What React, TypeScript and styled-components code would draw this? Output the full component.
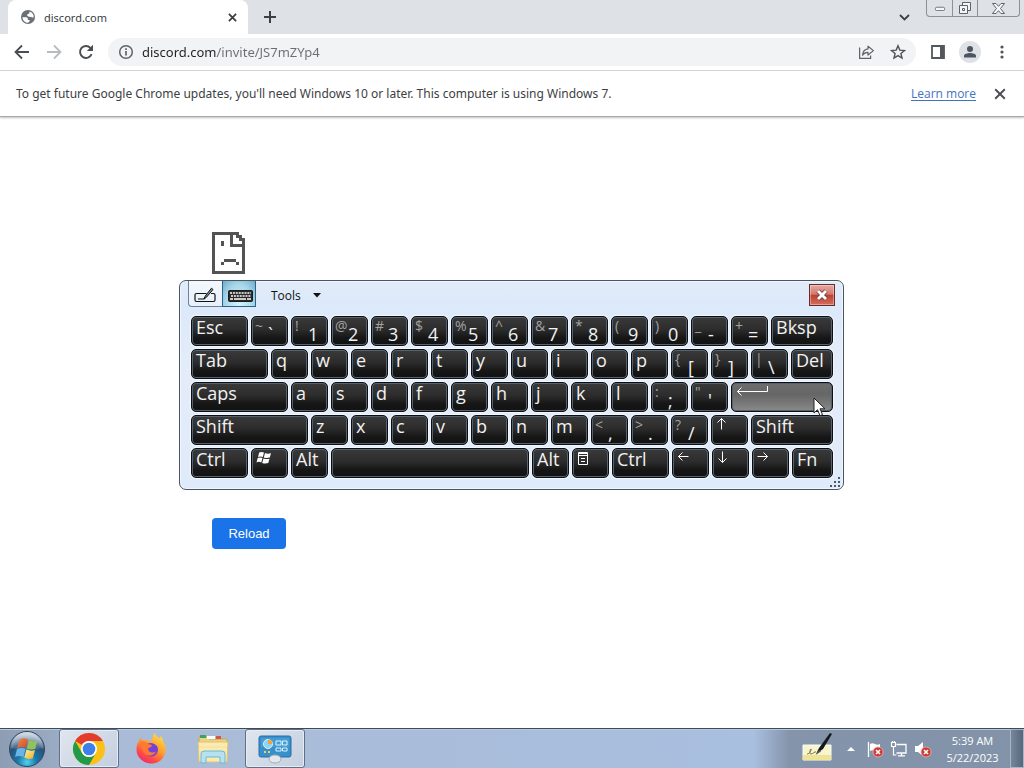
import React from "react";
import styled, { createGlobalStyle, css } from "styled-components";

const GlobalStyle = createGlobalStyle`
  *, *::before, *::after { box-sizing: border-box; }
  body {
    margin: 0;
    background: #fff;
    font-family: "Open Sans", "Noto Sans", sans-serif;
    font-size: 12px;
    color: #3c4043;
  }
  button, input { font-family: inherit; }
`;

const Desktop = styled.div`
  position: relative;
  display: flex;
  flex-direction: column;
  min-height: 100vh;
`;

const IconButton = styled.button<{ $width?: number }>`
  display: flex;
  align-items: center;
  justify-content: center;
  flex: none;
  width: ${(p) => p.$width ?? 32}px;
  height: 28px;
  padding: 0;
  border: 0;
  background: none;
  color: #5f6368;
`;

/* ---------- browser ---------- */

const TabStrip = styled.header`
  display: flex;
  align-items: stretch;
  height: 34px;
  padding-left: 8px;
  background: #dee1e6;
`;

const Tab = styled.div`
  display: flex;
  align-items: center;
  width: 240px;
  padding: 0 0 0 12px;
  gap: 8px;
  border-radius: 8px 8px 0 0;
  background: #fff;
`;

const TabTitle = styled.span`
  flex: 1;
  font-family: "Noto Sans", "Open Sans", sans-serif;
  font-size: 11px;
`;

const TabActions = styled.div`
  display: flex;
  align-items: center;
  flex: 1;
  justify-content: space-between;
  padding: 0 6px;
`;

const CaptionButtons = styled.div`
  display: flex;
  align-self: flex-start;
  height: 17px;
  margin-right: 4px;
  border: 1px solid #8b9199;
  border-top: 0;
  border-radius: 0 0 4px 4px;
`;

const CaptionButton = styled.button<{ $wide?: boolean }>`
  display: flex;
  align-items: center;
  justify-content: center;
  width: ${(p) => (p.$wide ? 42 : 25)}px;
  padding: 0;
  border: 0;
  background: none;
  & + & { border-left: 1px solid #8b9199; }
`;

const Toolbar = styled.nav`
  display: flex;
  align-items: center;
  height: 37px;
  padding: 0 6px;
  border-bottom: 1px solid #d5d7da;
  background: #fff;
`;

const AddressBar = styled.label`
  display: flex;
  align-items: center;
  flex: 1;
  height: 28px;
  margin: 0 6px;
  padding: 0 2px 0 10px;
  border-radius: 14px;
  background: #f1f3f4;
`;

const AddressInput = styled.input`
  flex: 1;
  min-width: 0;
  height: 24px;
  margin-left: 8px;
  padding: 0;
  border: 0;
  outline: 0;
  font-family: "Noto Sans", "Open Sans", sans-serif;
  font-size: 13px;
  color: #6a6e73;
  background: linear-gradient(90deg, #202124 75px, #6a6e73 75px);
  background-clip: text;
  -webkit-text-fill-color: transparent;
`;

const Avatar = styled.span`
  display: flex;
  align-items: center;
  justify-content: center;
  width: 22px;
  height: 22px;
  border-radius: 50%;
  background: #dee1e6;
`;

const InfoBar = styled.section`
  display: flex;
  align-items: center;
  min-height: 46px;
  padding: 0 8px 0 16px;
  border-bottom: 1px solid #a8a8a8;
  box-shadow: 0 1px 2px rgba(0, 0, 0, 0.25);
`;

const InfoText = styled.p`
  flex: 1;
  margin: 0;
  font-family: "Noto Sans", "Open Sans", sans-serif;
`;

const InfoLink = styled.a`
  margin-right: 8px;
  color: #3f74bd;
  text-decoration: underline;
  text-underline-offset: 2px;
`;

const Page = styled.main`
  flex: 1;
  display: flex;
  flex-direction: column;
  align-items: flex-start;
  justify-content: space-between;
  width: 100%;
  max-width: 600px;
  min-height: 611px;
  margin: 0 auto;
  padding: 115px 0 179px;
`;

const ReloadButton = styled.button`
  height: 31px;
  min-width: 74px;
  padding: 0 16px;
  border: 0;
  border-radius: 4px;
  background: #1a73e8;
  color: #fff;
  font-family: "Liberation Sans", sans-serif;
  font-size: 13px;
`;

/* ---------- on-screen keyboard ---------- */

const KeyboardWindow = styled.section`
  position: absolute;
  top: 280px;
  left: calc(50% - 333px);
  width: 665px;
  padding: 0 10px 11px 11px;
  border: 1px solid #4a5563;
  border-radius: 7px;
  background: linear-gradient(180deg, #e2ebf9 0%, #dce9fa 12%, #e4ecf9 45%, #dfeafa 100%);
  box-shadow: inset 0 0 0 1px #f0f6fd;
`;

const KeyboardHeader = styled.div`
  display: flex;
  align-items: flex-start;
  height: 35px;
  margin-left: -3px;
`;

const ModeButton = styled.button<{ $active?: boolean }>`
  display: flex;
  align-items: center;
  justify-content: center;
  width: 35px;
  height: 26px;
  padding: 3px 2px 0 0;
  border: 1px solid #6d8299;
  border-top: 0;
  border-radius: 0 0 0 4px;
  background: linear-gradient(180deg, #f4f8fd, #e6effa);
  ${(p) =>
    p.$active &&
    css`
      width: 34px;
      margin-left: -1px;
      padding: 4px 0 0 2px;
      border-color: #2c628b;
      border-radius: 0;
      background: radial-gradient(ellipse at 50% 100%, #d5f5fc 0%, #a9d8ea 60%, #6fabcc 100%);
    `}
`;

const ToolsButton = styled.button`
  display: flex;
  align-items: center;
  gap: 12px;
  height: 29px;
  margin-left: 9px;
  border: 0;
  background: none;
  font-size: 12px;
  color: #111;
`;

const CloseButton = styled.button`
  display: flex;
  align-items: center;
  justify-content: center;
  width: 26px;
  height: 22px;
  margin: 3px -2px 0 auto;
  padding: 0;
  border: 1px solid #6b2a2a;
  background: linear-gradient(180deg, #e6aaa3 0%, #d6776c 46%, #bd4031 52%, #d2705e 100%);
  box-shadow: inset 0 0 0 1px rgba(255, 255, 255, 0.35);
`;

const KeyRows = styled.div`
  display: flex;
  flex-direction: column;
  gap: 3px;
`;

const KeyRow = styled.div`
  display: flex;
  gap: 3px;
`;

const KeyCap = styled.button<{ $width: number; $lit?: boolean; $fill?: boolean }>`
  display: flex;
  align-items: flex-start;
  flex: ${(p) => (p.$fill ? "1 1 0" : "none")};
  width: ${(p) => p.$width}px;
  height: 30px;
  padding: 0 0 0 4px;
  border: 1px solid #0b0f14;
  border-radius: 5px;
  background: ${(p) =>
    p.$lit
      ? "linear-gradient(180deg, #6e6e6e, #666 40%, #777 70%, #8a8a8a)"
      : "linear-gradient(180deg, #3a3a3a, #2c2c2c 45%, #161616 75%, #121212)"};
  box-shadow: inset 0 0 0 1px #56626d, 0 0 1px 1px #f3f7fc;
  color: #f2f2f2;
  font-size: 18px;
  line-height: 20px;
  text-align: left;
`;

const Shifted = styled.span`
  flex: none;
  width: 12px;
  margin-left: -1px;
  font-size: 14px;
  line-height: 17px;
  color: #a2a2a2;
`;

const Base = styled.span`
  padding-top: 7px;
  margin-left: 1px;
`;

const Glyph = styled.svg`
  display: block;
  flex: none;
  margin-top: 2px;
`;

const Grip = styled.svg`
  position: absolute;
  right: 3px;
  bottom: 2px;
`;

const Pointer = styled.svg`
  position: absolute;
  top: 116px;
  left: 633px;
`;

/* ---------- taskbar ---------- */

const Taskbar = styled.footer`
  display: flex;
  align-items: stretch;
  height: 40px;
  border-top: 1px solid #3d4a5a;
  background: linear-gradient(90deg, #8d9db4 0, #9aabc4 58px, #a9bbd6 120px, #a9bfdf calc(100% - 270px), #8494ab calc(100% - 235px), #8292a8 100%);
  box-shadow: inset 0 1px 0 #bccadd;
`;

const StartButton = styled.button`
  display: flex;
  align-items: center;
  justify-content: center;
  width: 53px;
  margin-right: 6px;
  padding: 0;
  border: 0;
  background: none;
`;

const TaskButton = styled.button<{ $open?: boolean }>`
  display: flex;
  align-items: center;
  justify-content: center;
  width: 60px;
  margin-right: 2px;
  padding: 0;
  border: 1px solid transparent;
  border-radius: 3px;
  background: none;
  ${(p) =>
    p.$open &&
    css`
      border-color: #5f7086;
      background: linear-gradient(135deg, #e0e6ee, #c3cedf);
      box-shadow: inset 0 0 0 1px #e6ecf4;
    `}
`;

const Tray = styled.div`
  display: flex;
  align-items: center;
  margin-left: auto;
`;

const TrayButton = styled.button<{ $width?: number }>`
  display: flex;
  align-items: center;
  justify-content: center;
  width: ${(p) => p.$width ?? 24}px;
  height: 38px;
  padding: 0;
  border: 0;
  background: none;
`;

const Clock = styled.time`
  width: 75px;
  text-align: center;
  font-size: 11px;
  line-height: 17px;
  color: #fff;
`;

const ShowDesktop = styled.button`
  align-self: stretch;
  width: 14px;
  padding: 0;
  border: 1px solid #a9b5c4;
  background: linear-gradient(90deg, #76869b, #56667b);
`;

/* ---------- icons ---------- */

const GlobeIcon = () => (
  <svg width="16" height="16" viewBox="0 0 16 16" aria-hidden="true">
    <circle cx="8" cy="8" r="7" fill="#6b7074" />
    <path d="M2.500 8.200H6.500q1.300.2 1.300 1.500v1.200h1.800v1.300L8 13.800C4.800 13.600 2.500 11 2.500 8.200z" fill="#fff" />
    <path d="M9.800 2.600c2.600 1 4 3.200 3.900 5.600q-1.700 1-2.700-.4-1.200.4-2.600-.3Q6.500 7 7.400 5.300 9.700 5 9.800 2.600z" fill="#fff" />
  </svg>
);

const Cross = ({ size = 10, color = "#3c4043", stroke = 2 }) => (
  <svg width={size} height={size} viewBox="0 0 10 10" aria-hidden="true">
    <path d="M1 1l8 8M9 1l-8 8" stroke={color} strokeWidth={stroke} fill="none" />
  </svg>
);

const ArrowIcon = ({ color, forward = false }: { color: string; forward?: boolean }) => (
  <svg width="16" height="16" viewBox="0 0 16 16" aria-hidden="true">
    <path
      d={forward ? "M1 8h13M8 1.500 14.500 8 8 14.500" : "M15 8H2M8 1.500 1.500 8 8 14.500"}
      stroke={color}
      strokeWidth="1.800"
      fill="none"
    />
  </svg>
);

const ReloadIcon = () => (
  <svg width="16" height="16" viewBox="0 0 16 16" aria-hidden="true">
    <path d="M13.600 10.200A6 6 0 1 1 12.400 3.800L14 5.500" stroke="#4a4e52" strokeWidth="1.900" fill="none" />
    <path d="M15 .8v6.200H8.800z" fill="#4a4e52" />
  </svg>
);

const InfoIcon = () => (
  <svg width="16" height="16" viewBox="0 0 16 16" aria-hidden="true">
    <circle cx="8" cy="8" r="6.300" stroke="#5f6368" strokeWidth="1.500" fill="none" />
    <path d="M8 7v4.500M8 4.200v1.700" stroke="#5f6368" strokeWidth="1.700" />
  </svg>
);

const ShareIcon = () => (
  <svg width="17" height="16" viewBox="0 0 17 16" fill="none" stroke="#5f6368" strokeWidth="1.200" aria-hidden="true">
    <path d="M1.600 3.500v10.900h11V11.500" />
    <path d="M10 2.200 15.400 6.600 10 11V8.300C7.600 8.300 5.800 9.100 4.500 11.200 4.800 7.600 6.800 5.300 10 4.900z" strokeLinejoin="round" />
  </svg>
);

const StarIcon = () => (
  <svg width="16" height="16" viewBox="0 0 16 16" aria-hidden="true">
    <path d="M8 1.800l1.800 4.300 4.700.4-3.600 3 1.100 4.600L8 11.600l-4 2.500 1.100-4.600-3.600-3 4.700-.4z" fill="none" stroke="#4f5357" strokeWidth="1.400" />
  </svg>
);

const SidePanelIcon = () => (
  <svg width="14" height="14" viewBox="0 0 14 14" aria-hidden="true">
    <path d="M1 1h12v12H1z" fill="none" stroke="#54585d" strokeWidth="1.800" />
    <path d="M9 1h4v12H9z" fill="#54585d" />
  </svg>
);

const PersonIcon = () => (
  <svg width="14" height="14" viewBox="0 0 14 14" fill="#4d5560" aria-hidden="true">
    <circle cx="7" cy="4" r="3" />
    <path d="M1 12.500v-1.600C1 8.900 4.500 8 7 8s6 .9 6 2.900v1.600z" />
  </svg>
);

const DotsIcon = () => (
  <svg width="4" height="14" viewBox="0 0 4 14" fill="#4f5357" aria-hidden="true">
    <circle cx="2" cy="2" r="1.600" />
    <circle cx="2" cy="7" r="1.600" />
    <circle cx="2" cy="12" r="1.600" />
  </svg>
);

const SadPageIcon = () => (
  <svg width="33" height="42" viewBox="0 0 33 42" fill="#535353" role="img" aria-label="Page error">
    <path d="M0 0h27v3h3v3h3v36H0zM3 3v36h27V15H18V3zM21 3v9h9V9h-3V6h-3V3z" fillRule="evenodd" />
    <path d="M9 9h3v5H9zM12 27h12v3H12zM9 30h3v3H9zM24 30h3v3h-3z" />
  </svg>
);

const PenInputIcon = () => (
  <svg width="22" height="17" viewBox="0 0 22 17" aria-hidden="true">
    <path d="M12.500 6.500H2.500q-1.500 0-1.500 1.500v5q0 1.500 1.500 1.500h17q1.500 0 1.500-1.500V8q0-1.500-1.500-1.500h-2.500" fill="none" stroke="#111" strokeWidth="1.200" />
    <path d="M4 12h5.500l1.200-.6" stroke="#111" strokeWidth="1.200" fill="none" />
    <path d="M10 12l1.300-3 6.200-7.800 1.500 1.300L12.500 10.200z" fill="#8a8f95" stroke="#111" />
  </svg>
);

const KeyboardIcon = () => (
  <svg width="25" height="12" viewBox="0 0 25 12" aria-hidden="true">
    <rect x=".5" y=".5" width="24" height="11" rx="1" fill="#2a2a2a" stroke="#1b1b1b" />
    <path d="M2 3h21" stroke="#fff" strokeWidth="1.600" strokeDasharray="2 .9" />
    <path d="M3 6h20" stroke="#fff" strokeWidth="1.600" strokeDasharray="2 .9" />
    <path d="M2 9h3M6 9h12M19 9h4" stroke="#fff" strokeWidth="1.600" />
  </svg>
);

const WindowsFlag = () => (
  <Glyph width="16" height="14" viewBox="0 0 16 14" fill="#fff" aria-hidden="true">
    <path d="M3.200 1.500Q5.500.3 8 1.600L6.800 6Q4.500 4.900 2 6zM9 2q2.500 1.200 6 .2L13.800 6.500Q10.500 7.500 7.800 6.400zM1.700 7Q4 5.900 6.500 7L5.300 11.500Q3 10.300.5 11.400zM7.500 7.500q3 1.100 6 .2L12.300 12Q9 13 6.200 11.900z" />
  </Glyph>
);

const MenuGlyph = () => (
  <Glyph width="13" height="15" viewBox="0 0 13 15" fill="none" stroke="#fff" aria-hidden="true">
    <path d="M1.500 1.500h9v12h-9zM1.500 4.500h9M4 7.500h4M4 10.500h4" />
    <path d="M1 2.500h10" />
  </Glyph>
);

const arrowPaths = {
  left: "M1.500 5.500h10M5.500 1.500l-4 4 4 4",
  right: "M.5 5.500h10M6.500 1.500l4 4-4 4",
  up: "M5.500.5v11M1.500 4.500l4-4 4 4",
  down: "M5.500.5v11M1.500 7.500l4 4 4-4",
};

const ArrowGlyph = ({ dir }: { dir: keyof typeof arrowPaths }) => (
  <Glyph width="12" height="13" viewBox="0 0 12 13" fill="none" stroke="#fff" aria-hidden="true">
    <path d={arrowPaths[dir]} />
  </Glyph>
);

const EnterGlyph = () => (
  <Glyph width="33" height="12" viewBox="0 0 33 12" fill="none" stroke="#fff" aria-hidden="true">
    <path d="M31.500 1v5.500H1.500M5.500 2.500l-4 4 4 4" />
  </Glyph>
);

const StartOrb = () => (
  <svg width="38" height="38" viewBox="0 0 38 38" aria-hidden="true">
    <defs>
      <radialGradient id="orb" cx="50%" cy="88%" r="80%">
        <stop offset="0" stopColor="#4fd2ee" />
        <stop offset=".35" stopColor="#1877a8" />
        <stop offset=".7" stopColor="#2b5277" />
        <stop offset="1" stopColor="#8fa9c0" />
      </radialGradient>
      <linearGradient id="shine" x1="0" y1="0" x2="0" y2="1">
        <stop offset="0" stopColor="#fff" stopOpacity=".6" />
        <stop offset="1" stopColor="#fff" stopOpacity=".08" />
      </linearGradient>
      <linearGradient id="paneRed" x1="0" y1="0" x2="1" y2="1">
        <stop offset="0" stopColor="#f08a4c" />
        <stop offset="1" stopColor="#d2452a" />
      </linearGradient>
      <linearGradient id="paneYellow" x1="0" y1="0" x2="1" y2="1">
        <stop offset="0" stopColor="#fff0a0" />
        <stop offset="1" stopColor="#f2a922" />
      </linearGradient>
    </defs>
    <circle cx="19" cy="19" r="17.500" fill="url(#orb)" stroke="#30465d" />
    <path d="M3 18a16 16 0 0 1 32 0q-16 4-32 0z" fill="url(#shine)" />
    <path d="M11.500 9.500q4-2.500 8.500 0l-2.200 8.500q-4-2-8.500 0z" fill="url(#paneRed)" />
    <path d="M21 10q4 2.500 8.500.5l-2.200 8.300q-4.500 1.700-8.600-.3z" fill="#94c25a" />
    <path d="M9 19q4.200-2 8.500 0l-2.200 8.300q-4-2.500-8.300-.3z" fill="#6cb4e6" />
    <path d="M18.400 19.600q4.300 2 8.600.5l-2.200 8.100q-4.500 1.700-8.500-.7z" fill="url(#paneYellow)" />
  </svg>
);

const ChromeIcon = () => (
  <svg width="34" height="34" viewBox="-17 -17 34 34" aria-hidden="true">
    <circle r="16" fill="#fbc116" />
    <path d="M-13.860-8A16 16 0 0 1 13.860-8H0a8 8 0 0 0-6.930 4z" fill="#e33b2e" />
    <path d="M-13.860-8A16 16 0 0 0 0 16L6.930 4A8 8 0 0 1-6.930 4z" fill="#229a4a" />
    <circle r="8" fill="#fff" />
    <circle r="6.300" fill="#3f7fe8" />
  </svg>
);

const FirefoxIcon = () => (
  <svg width="32" height="32" viewBox="0 0 32 32" aria-hidden="true">
    <defs>
      <linearGradient id="fox" x1=".8" y1="0" x2=".2" y2="1">
        <stop offset="0" stopColor="#ffe14a" />
        <stop offset=".45" stopColor="#ff9a2a" />
        <stop offset=".75" stopColor="#ff4a45" />
        <stop offset="1" stopColor="#e62a78" />
      </linearGradient>
    </defs>
    <path d="M19.500 0c1.500 2.500 3 4 5 5.500q1-1 1-2.500c2 2 3 4.500 3 6.500 2 3 2.500 5.500 2 8.500C29.500 26 23.500 30.500 16.500 30.500 8.500 30.500 1.500 24.500 1.500 17c0-4 1-7 2.500-9L5 5l3 2.500c1.500-.5 3-.5 4.500 0q3 .5 4.500 1C17 5.500 18 2.500 19.500 0z" fill="url(#fox)" />
    <path d="M10 13c2-3.500 8-4.500 12 0 3 5-1 11-6 10.500-5 0-8-4.500-6-10.500z" fill="#7542d8" />
    <path d="M5 9c3-1.500 6-.5 8 2l4 1c0 2-2.500 2.500-4 3.500 0 4 4.500 5 8 3-2 4.500-8 5.500-11.500 2C6.500 17.500 8 13 5 9z" fill="#ff7a30" />
  </svg>
);

const ExplorerIcon = () => (
  <svg width="34" height="32" viewBox="0 0 34 32" aria-hidden="true">
    <path d="M3 4h8l2 2h18v22H3z" fill="#ecd283" stroke="#c7a95c" />
    <path d="M4 2h6v3H4z" fill="#3fa15b" />
    <path d="M11 3h8v3h-8z" fill="#fff" />
    <path d="M20 3h5v3h-5z" fill="#d9573e" />
    <path d="M2 9h30l-1 20H3z" fill="#fbebb0" stroke="#dec27a" />
    <path d="M3 14h28M3 19h28" stroke="#f6e096" />
    <path d="M5 30V21q0-3 3-3h18q3 0 3 3v9h-5v-6H10v6z" fill="#b5e1f0" stroke="#6db8d4" />
  </svg>
);

const ControlPanelIcon = () => (
  <svg width="34" height="30" viewBox="0 0 34 30" aria-hidden="true">
    <rect x="1" y="2" width="32" height="21" rx="2" fill="#3590cc" stroke="#2a6da3" />
    <path d="M3 4h28v9H3z" fill="#56aadd" opacity=".5" />
    <circle cx="10" cy="10" r="4.500" fill="#8fd3f2" stroke="#dff2fc" />
    <path d="M10 10V5.500A4.500 4.500 0 0 1 14.500 10z" fill="#f3a03a" />
    <path d="M18 7h5v4h-5zM24.500 7h4.500v4h-4.500zM18 14h5v3h-5zM24.500 14h4.500v3h-4.500z" fill="none" stroke="#dff2fc" />
    <path d="M6 18h2M10 18h2" stroke="#f6cf58" strokeWidth="2" />
    <ellipse cx="17" cy="25" rx="6" ry="4" fill="#e4e7ea" stroke="#a4acb2" />
  </svg>
);

const TabletPenIcon = () => (
  <svg width="34" height="32" viewBox="0 0 34 32" aria-hidden="true">
    <path d="M2 12h28v15H2z" fill="#f7f5cf" stroke="#fbfbf4" />
    <path d="M2 22h28v5H2z" fill="#efe394" />
    <path d="M6 21c3 0 5-5 4-5s-2 5 0 5 4-3 5-2" fill="none" stroke="#7a6d46" />
    <path d="M15 21l3-6L29 0l2 1-9 15z" fill="#16181b" />
    <path d="M14.500 22l3.500-5 2 1.500z" fill="#555" />
  </svg>
);

const ErrorBadge = ({ x, y }: { x: number; y: number }) => (
  <g transform={`translate(${x} ${y})`}>
    <circle r="5" fill="#cf3a36" stroke="#e9b4b0" strokeWidth=".8" />
    <path d="M-2-2l4 4M2-2l-4 4" stroke="#fff" strokeWidth="1.600" />
  </g>
);

const FlagIcon = () => (
  <svg width="18" height="18" viewBox="0 0 18 18" aria-hidden="true">
    <path d="M2.500 2v15" stroke="#fff" strokeWidth="1.300" />
    <path d="M4 4q2.500-1.500 5 0t5 0v7q-2 1.500-5 0t-5 0z" fill="#fff" />
    <ErrorBadge x={12} y={12} />
  </svg>
);

const NetworkIcon = () => (
  <svg width="18" height="18" viewBox="0 0 18 18" fill="none" stroke="#fff" aria-hidden="true">
    <path d="M6.500 4.500h9.500v8.500h-9.500M8 15.800h7M11.500 13v3" strokeWidth="1.300" />
    <path d="M1.500 2.500h4v4h-4zM3.500 6.500v8.500h3M2.500 1v1.500M4.500 1v1.500" strokeWidth="1.200" />
  </svg>
);

const SpeakerIcon = () => (
  <svg width="18" height="18" viewBox="0 0 18 18" aria-hidden="true">
    <path d="M1 6h3l5-4v14l-5-4H1z" fill="#fff" />
    <ErrorBadge x={12} y={12} />
  </svg>
);

/* ---------- key data ---------- */

type KeyDef = {
  label?: string;
  shifted?: string;
  width?: number;
  name?: string;
  glyph?: React.ReactNode;
  lit?: boolean;
};

const letters = (s: string): KeyDef[] => s.split("").map((label) => ({ label }));
const pair = (shifted: string, label: string): KeyDef => ({ shifted, label });

const rows: KeyDef[][] = [
  [
    { label: "Esc", width: 57 },
    pair("~", "`"), pair("!", "1"), pair("@", "2"), pair("#", "3"), pair("$", "4"), pair("%", "5"),
    pair("^", "6"), pair("&", "7"), pair("*", "8"), pair("(", "9"), pair(")", "0"), pair("_", "-"), pair("+", "="),
    { label: "Bksp" },
  ],
  [{ label: "Tab", width: 77 }, ...letters("qwertyuiop"), pair("{", "["), pair("}", "]"), pair("|", "\\"), { label: "Del" }],
  [
    { label: "Caps", width: 97 }, ...letters("asdfghjkl"), pair(":", ";"), pair("\"", "'"),
    { name: "Enter", glyph: <EnterGlyph />, lit: true },
  ],
  [
    { label: "Shift", width: 117 }, ...letters("zxcvbnm"), pair("<", ","), pair(">", "."), pair("?", "/"),
    { name: "Up", glyph: <ArrowGlyph dir="up" /> },
    { label: "Shift" },
  ],
  [
    { label: "Ctrl", width: 57 },
    { name: "Windows", glyph: <WindowsFlag /> },
    { label: "Alt" },
    { name: "Space", width: 198 },
    { label: "Alt" },
    { name: "Menu", glyph: <MenuGlyph /> },
    { label: "Ctrl", width: 57 },
    { name: "Left", glyph: <ArrowGlyph dir="left" /> },
    { name: "Down", glyph: <ArrowGlyph dir="down" /> },
    { name: "Right", glyph: <ArrowGlyph dir="right" /> },
    { label: "Fn" },
  ],
];

const Key = ({ def, last }: { def: KeyDef; last: boolean }) => (
  <KeyCap type="button" $width={def.width ?? 37} $fill={last} $lit={def.lit} aria-label={def.name}>
    {def.shifted && <Shifted>{def.shifted}</Shifted>}
    {def.shifted ? <Base>{def.label}</Base> : def.label}
    {def.glyph}
  </KeyCap>
);

const OnScreenKeyboard = () => (
  <KeyboardWindow aria-label="On-screen keyboard">
    <KeyboardHeader>
      <ModeButton type="button" aria-label="Writing pad"><PenInputIcon /></ModeButton>
      <ModeButton type="button" $active aria-label="Keyboard"><KeyboardIcon /></ModeButton>
      <ToolsButton type="button">
        Tools
        <svg width="8" height="5" viewBox="0 0 8 5" aria-hidden="true"><path d="M0 0h8L4 4.500z" fill="#111" /></svg>
      </ToolsButton>
      <CloseButton type="button" aria-label="Close keyboard">
        <svg width="14" height="12" viewBox="0 0 14 12" aria-hidden="true">
          <path d="M3 2l8 8M11 2l-8 8" stroke="#5e3036" strokeWidth="4.500" />
          <path d="M3 2l8 8M11 2l-8 8" stroke="#fff" strokeWidth="3" />
        </svg>
      </CloseButton>
    </KeyboardHeader>
    <KeyRows>
      {rows.map((row, r) => (
        <KeyRow key={r}>
          {row.map((def, i) => <Key key={i} def={def} last={i === row.length - 1} />)}
        </KeyRow>
      ))}
    </KeyRows>
    <Grip width="10" height="10" viewBox="0 0 10 10" fill="#4d5866" aria-hidden="true">
      <path d="M8 0h2v2H8zM4 4h2v2H4zM8 4h2v2H8zM0 8h2v2H0zM4 8h2v2H4zM8 8h2v2H8z" />
    </Grip>
    <Pointer width="13" height="20" viewBox="0 0 13 20" aria-hidden="true">
      <path d="M1 1v15l3.500-3.300 2.500 6 2.500-1.100-2.500-5.800H12z" fill="#fff" stroke="#222" />
    </Pointer>
  </KeyboardWindow>
);

export default function App() {
  return (
    <Desktop>
      <GlobalStyle />
      <TabStrip>
        <Tab>
          <GlobeIcon />
          <TabTitle>discord.com</TabTitle>
          <IconButton aria-label="Close tab"><Cross size={9} /></IconButton>
        </Tab>
        <TabActions>
          <IconButton aria-label="New tab">
            <svg width="12" height="12" viewBox="0 0 12 12" aria-hidden="true"><path d="M6 0v12M0 6h12" stroke="#3c4043" strokeWidth="2" /></svg>
          </IconButton>
          <IconButton aria-label="Search tabs">
            <svg width="11" height="7" viewBox="0 0 11 7" aria-hidden="true"><path d="M1 1l4.500 4.500L10 1" stroke="#3c4043" strokeWidth="1.800" fill="none" /></svg>
          </IconButton>
        </TabActions>
        <CaptionButtons>
          <CaptionButton aria-label="Minimize">
            <svg width="12" height="5" viewBox="0 -1 12 6" aria-hidden="true"><rect x=".5" y=".5" width="11" height="4" rx="1.500" fill="#f4f5f7" stroke="#5d636b" /></svg>
          </CaptionButton>
          <CaptionButton aria-label="Restore">
            <svg width="14" height="13" viewBox="0 0 14 13" fill="#f4f5f7" stroke="#5d636b" aria-hidden="true">
              <path d="M4.500.5h8v8h-8z" /><path d="M1.500 3.500h8v8h-8z" /><path d="M4.500 6.500h2v2h-2z" />
            </svg>
          </CaptionButton>
          <CaptionButton $wide aria-label="Close">
            <svg width="13" height="11" viewBox="0 0 13 11" aria-hidden="true">
              <path d="M.5.5h3.500l2.500 2.800L9 .5h3.500L8.500 5.500l4 5H9L6.500 7.700 4 10.500H.5l4-5z" fill="#f8f8fa" stroke="#5d636b" />
            </svg>
          </CaptionButton>
        </CaptionButtons>
      </TabStrip>
      <Toolbar>
        <IconButton aria-label="Back"><ArrowIcon color="#4a4e52" /></IconButton>
        <IconButton aria-label="Forward"><ArrowIcon color="#b9bcbf" forward /></IconButton>
        <IconButton aria-label="Reload page"><ReloadIcon /></IconButton>
        <AddressBar>
          <InfoIcon />
          <AddressInput aria-label="Address" defaultValue="discord.com/invite/JS7mZYp4" />
          <IconButton type="button" aria-label="Share"><ShareIcon /></IconButton>
          <IconButton type="button" aria-label="Bookmark"><StarIcon /></IconButton>
        </AddressBar>
        <IconButton aria-label="Side panel"><SidePanelIcon /></IconButton>
        <IconButton aria-label="Profile"><Avatar><PersonIcon /></Avatar></IconButton>
        <IconButton aria-label="Menu"><DotsIcon /></IconButton>
      </Toolbar>
      <InfoBar>
        <InfoText>To get future Google Chrome updates, you'll need Windows 10 or later. This computer is using Windows 7.</InfoText>
        <InfoLink href="#">Learn more</InfoLink>
        <IconButton aria-label="Dismiss"><Cross size={12} color="#4a4e52" stroke={1.600} /></IconButton>
      </InfoBar>
      <Page>
        <SadPageIcon />
        <ReloadButton type="button">Reload</ReloadButton>
      </Page>
      <OnScreenKeyboard />
      <Taskbar>
        <StartButton aria-label="Start"><StartOrb /></StartButton>
        <TaskButton $open aria-label="Google Chrome"><ChromeIcon /></TaskButton>
        <TaskButton aria-label="Firefox"><FirefoxIcon /></TaskButton>
        <TaskButton aria-label="File Explorer"><ExplorerIcon /></TaskButton>
        <TaskButton $open aria-label="Control Panel"><ControlPanelIcon /></TaskButton>
        <Tray>
          <TrayButton $width={42} aria-label="Tablet input"><TabletPenIcon /></TrayButton>
          <TrayButton aria-label="Show hidden icons">
            <svg width="8" height="4" viewBox="0 0 8 4" aria-hidden="true"><path d="M0 4l4-4 4 4z" fill="#fff" /></svg>
          </TrayButton>
          <TrayButton aria-label="Action center"><FlagIcon /></TrayButton>
          <TrayButton aria-label="Network"><NetworkIcon /></TrayButton>
          <TrayButton aria-label="Volume"><SpeakerIcon /></TrayButton>
          <Clock>5:39 AM<br />5/22/2023</Clock>
          <ShowDesktop aria-label="Show desktop" />
        </Tray>
      </Taskbar>
    </Desktop>
  );
}
